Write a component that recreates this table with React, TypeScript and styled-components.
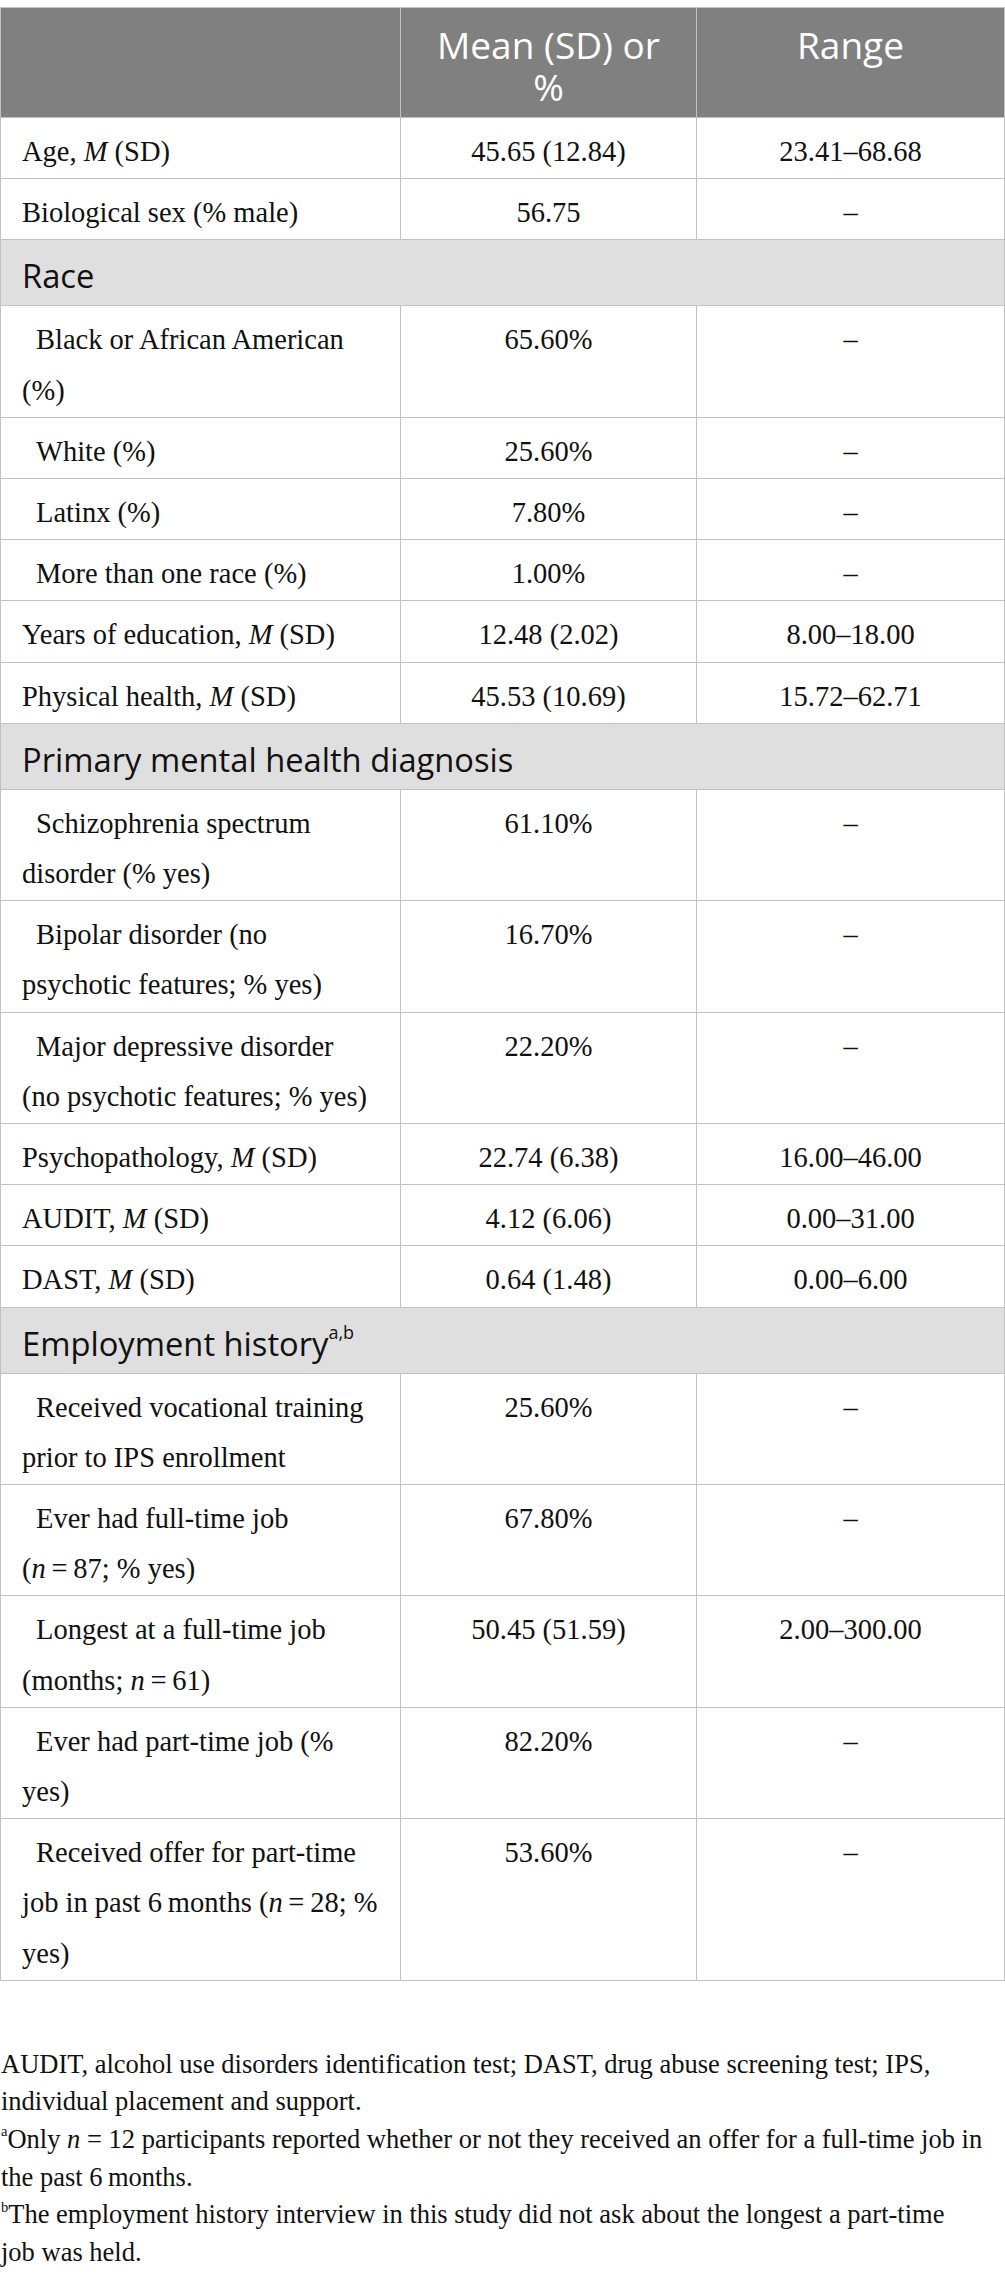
import React from 'react'
import styled, { createGlobalStyle } from 'styled-components'

const GlobalStyle = createGlobalStyle`
    html, body {
        margin: 0;
        padding: 0;
        background: #ffffff;
    }
    body {
        font-family: 'Liberation Serif', 'Times New Roman', serif;
        color: #111111;
    }
`

const StyledPage = styled.div`
    width: 1005px;
    padding-top: 7px;
`

const StyledTable = styled.table`
    width: 1004px;
    table-layout: fixed;
    border-collapse: collapse;
    border: 1px solid #c2c2c2;
`

const StyledHeadCell = styled.th`
    background: #7f807f;
    color: #ffffff;
    font-family: 'Open Sans', 'Noto Sans', sans-serif;
    font-weight: 400;
    font-size: 37px;
    line-height: 41.5px;
    text-align: center;
    vertical-align: top;
    padding: 16px 28px 10px;
    border: 1px solid #c2c2c2;
`

const StyledSectionCell = styled.td`
    background: #e0dfe0;
    color: #111111;
    font-family: 'Open Sans', 'Noto Sans', sans-serif;
    font-size: 32.7px;
    line-height: 45px;
    padding: 13px 21px 7px;
    border: 1px solid #c2c2c2;
`

const StyledCell = styled.td`
    font-size: 28.5px;
    line-height: 50.2px;
    vertical-align: top;
    padding: 9px 12px 1px 21px;
    border: 1px solid #c2c2c2;
    white-space: nowrap;
`

const StyledLabelCell = styled(StyledCell)<{ $indent?: boolean }>`
    text-indent: ${(p) => (p.$indent ? '14px' : '0')};
`

const StyledValueCell = styled(StyledCell)`
    text-align: center;
    padding-right: 21px;
`

const SectionSup = styled.sup`
    font-size: 55%;
    line-height: 0;
    vertical-align: baseline;
    position: relative;
    top: -0.95em;
`

const StyledNotes = styled.div`
    margin-top: 65px;
    padding-left: 1px;
`

const StyledNote = styled.p`
    margin: 0;
    font-size: 26.5px;
    line-height: 37.6px;
    white-space: nowrap;
`

const NoteSup = styled.sup`
    font-size: 55%;
    line-height: 0;
    vertical-align: baseline;
    position: relative;
    top: -0.8em;
`

// thin space; cells and notes do not wrap, so "n = 87" stays together
const ts = '\u2009'

type Row =
    | { kind: 'section'; label: React.ReactNode }
    | { kind: 'data'; lines: React.ReactNode[]; value: string; range: string; indent?: boolean }

const rows: Row[] = [
    { kind: 'data', lines: [<>Age, <i>M</i> (SD)</>], value: '45.65 (12.84)', range: '23.41–68.68' },
    { kind: 'data', lines: ['Biological sex (% male)'], value: '56.75', range: '–' },
    { kind: 'section', label: 'Race' },
    { kind: 'data', lines: ['Black or African American', '(%)'], value: '65.60%', range: '–', indent: true },
    { kind: 'data', lines: ['White (%)'], value: '25.60%', range: '–', indent: true },
    { kind: 'data', lines: ['Latinx (%)'], value: '7.80%', range: '–', indent: true },
    { kind: 'data', lines: ['More than one race (%)'], value: '1.00%', range: '–', indent: true },
    { kind: 'data', lines: [<>Years of education, <i>M</i> (SD)</>], value: '12.48 (2.02)', range: '8.00–18.00' },
    { kind: 'data', lines: [<>Physical health, <i>M</i> (SD)</>], value: '45.53 (10.69)', range: '15.72–62.71' },
    { kind: 'section', label: 'Primary mental health diagnosis' },
    { kind: 'data', lines: ['Schizophrenia spectrum', 'disorder (% yes)'], value: '61.10%', range: '–', indent: true },
    { kind: 'data', lines: ['Bipolar disorder (no', 'psychotic features; % yes)'], value: '16.70%', range: '–', indent: true },
    { kind: 'data', lines: ['Major depressive disorder', '(no psychotic features; % yes)'], value: '22.20%', range: '–', indent: true },
    { kind: 'data', lines: [<>Psychopathology, <i>M</i> (SD)</>], value: '22.74 (6.38)', range: '16.00–46.00' },
    { kind: 'data', lines: [<>AUDIT, <i>M</i> (SD)</>], value: '4.12 (6.06)', range: '0.00–31.00' },
    { kind: 'data', lines: [<>DAST, <i>M</i> (SD)</>], value: '0.64 (1.48)', range: '0.00–6.00' },
    { kind: 'section', label: <>Employment history<SectionSup>a,b</SectionSup></> },
    { kind: 'data', lines: ['Received vocational training', 'prior to IPS enrollment'], value: '25.60%', range: '–', indent: true },
    { kind: 'data', lines: ['Ever had full-time job', <>(<i>n</i>{ts}={ts}87; % yes)</>], value: '67.80%', range: '–', indent: true },
    { kind: 'data', lines: ['Longest at a full-time job', <>(months; <i>n</i>{ts}={ts}61)</>], value: '50.45 (51.59)', range: '2.00–300.00', indent: true },
    { kind: 'data', lines: ['Ever had part-time job (%', 'yes)'], value: '82.20%', range: '–', indent: true },
    {
        kind: 'data',
        lines: ['Received offer for part-time', <>job in past 6{ts}months (<i>n</i>{ts}={ts}28; %</>, 'yes)'],
        value: '53.60%',
        range: '–',
        indent: true,
    },
]

const Lines = ({ lines }: { lines: React.ReactNode[] }) => (
    <>
        {lines.map((line, i) => (
            <React.Fragment key={i}>
                {i > 0 && <br />}
                {line}
            </React.Fragment>
        ))}
    </>
)

const App = () => {
    return (
        <StyledPage>
            <GlobalStyle />
            <StyledTable>
                <colgroup>
                    <col style={{ width: 400 }} />
                    <col style={{ width: 296 }} />
                    <col style={{ width: 308 }} />
                </colgroup>
                <thead>
                    <tr>
                        <StyledHeadCell />
                        <StyledHeadCell>Mean (SD) or %</StyledHeadCell>
                        <StyledHeadCell>Range</StyledHeadCell>
                    </tr>
                </thead>
                <tbody>
                    {rows.map((row, i) =>
                        row.kind === 'section' ? (
                            <tr key={i}>
                                <StyledSectionCell colSpan={3}>{row.label}</StyledSectionCell>
                            </tr>
                        ) : (
                            <tr key={i}>
                                <StyledLabelCell $indent={row.indent}>
                                    <Lines lines={row.lines} />
                                </StyledLabelCell>
                                <StyledValueCell>{row.value}</StyledValueCell>
                                <StyledValueCell>{row.range}</StyledValueCell>
                            </tr>
                        )
                    )}
                </tbody>
            </StyledTable>

            <StyledNotes>
                <StyledNote>
                    AUDIT, alcohol use disorders identification test; DAST, drug abuse screening test; IPS,
                    <br />
                    individual placement and support.
                </StyledNote>
                <StyledNote>
                    <NoteSup>a</NoteSup>Only <i>n</i> = 12 participants reported whether or not they received an offer
                    for a full-time job in
                    <br />
                    the past 6{ts}months.
                </StyledNote>
                <StyledNote>
                    <NoteSup>b</NoteSup>The employment history interview in this study did not ask about the longest a
                    part-time
                    <br />
                    job was held.
                </StyledNote>
            </StyledNotes>
        </StyledPage>
    )
}
export default App
